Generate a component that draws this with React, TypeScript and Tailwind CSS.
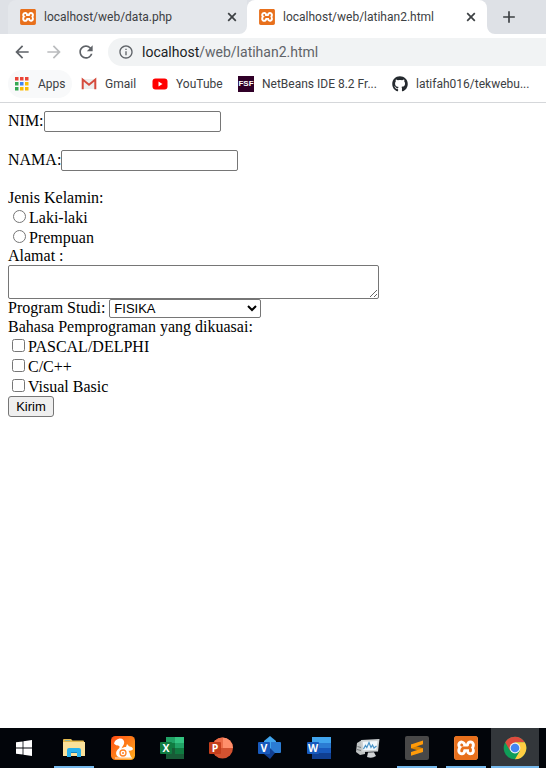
import type { ReactNode } from "react";
import { MdAdd, MdArrowBack, MdArrowForward, MdInfoOutline, MdRefresh } from "react-icons/md";
import { FaGithub } from "react-icons/fa";
import { SiXampp } from "react-icons/si";

function XamppIcon({ large = false }: { large?: boolean }) {
  return (
    <span className={large ? "flex size-6 shrink-0 rounded-sm bg-white" : "flex size-4 shrink-0 rounded-sm bg-white"}>
      <SiXampp className="size-full text-[#e8701c]" />
    </span>
  );
}

function CloseIcon() {
  return (
    <svg className="size-[14px]" viewBox="0 0 14 14">
      <path d="m3.200 3.200 7.600 7.600m0-7.600-7.600 7.600" stroke="currentColor" strokeWidth="1.700" />
    </svg>
  );
}

function TabStrip() {
  return (
    <header className="flex h-[34px] bg-[#dee1e6] pl-2 text-xs text-[#3c4043]">
      <div className="flex w-[231px] items-center rounded-tl-lg bg-[#e4e7eb] pl-3">
        <XamppIcon />
        <span className="flex-1 pl-2">localhost/web/data.php</span>
        <button aria-label="Close tab data.php"><CloseIcon /></button>
      </div>
      <svg className="h-full w-2 bg-[#e4e7eb]" viewBox="0 0 8 34">
        <path d="M8 0v34H0a8 8 0 0 0 8-8z" fill="#fff" />
      </svg>
      <div className="flex w-60 items-center rounded-t-lg bg-white px-3 pr-[9px]">
        <XamppIcon />
        <span className="flex-1 pl-2">localhost/web/latihan2.html</span>
        <button aria-label="Close tab latihan2.html"><CloseIcon /></button>
      </div>
      <svg className="h-full w-2" viewBox="0 0 8 34">
        <path d="M0 26v8h8a8 8 0 0 1-8-8z" fill="#fff" />
      </svg>
      <button aria-label="New tab" className="pl-1"><MdAdd className="size-5" /></button>
    </header>
  );
}

function Toolbar() {
  return (
    <nav className="flex h-9 items-center gap-3 pl-3 text-[#5f6368]">
      <button aria-label="Back"><MdArrowBack className="size-5" /></button>
      <button aria-label="Forward" className="text-[#babcbe]"><MdArrowForward className="size-5" /></button>
      <button aria-label="Reload"><MdRefresh className="size-5" /></button>
      <div className="flex h-7 flex-1 items-center gap-2 rounded-l-full bg-[#f1f3f4] pl-[10px] text-sm">
        <MdInfoOutline className="size-4" />
        <span><span className="text-[#202124]">localhost</span>/web/latihan2.html</span>
      </div>
    </nav>
  );
}

const appColors = ["#ea4335", "#ea4335", "#ea4335", "#34a853", "#4285f4", "#fbbc04", "#34a853", "#fbbc04", "#fbbc04"];

function Bookmark({ icon, children, className }: { icon: ReactNode; children: ReactNode; className: string }) {
  return (
    <a href="#" className={`flex h-7 shrink-0 items-center gap-2 whitespace-nowrap ${className}`}>
      {icon}
      {children}
    </a>
  );
}

function Bookmarks() {
  return (
    <nav className="flex h-[33px] overflow-hidden border-b border-[#d5d7da] pl-2 text-xs text-[#3c4043]">
      <Bookmark
        className="w-[64px] rounded-full bg-[#f8f9fa] pl-[6px]"
        icon={
          <svg className="size-4 shrink-0" viewBox="0 0 16 16">
            {appColors.map((color, i) => (
              <rect key={i} x={1 + (i % 3) * 5} y={1 + Math.floor(i / 3) * 5} width="3.5" height="3.5" fill={color} />
            ))}
          </svg>
        }
      >Apps</Bookmark>
      <Bookmark
        className="w-[72px] pl-[9px]"
        icon={
          <svg className="size-4 shrink-0" viewBox="0 0 16 16">
            <path d="M1 3h14v10H1z" fill="#eee" />
            <path d="M1.7 13.3V3.5L8 8.7l6.3-5.2v9.8" fill="none" stroke="#d54b3d" strokeWidth="2" />
          </svg>
        }
      >Gmail</Bookmark>
      <Bookmark
        className="w-[86px] pl-2"
        icon={
          <svg className="size-4 shrink-0" viewBox="0 0 16 16">
            <rect x=".5" y="2.5" width="15" height="11" rx="3" fill="#f00" />
            <path d="m6.5 5.5 4 2.5-4 2.5z" fill="#fff" />
          </svg>
        }
      >YouTube</Bookmark>
      <Bookmark
        className="w-[154px] pl-2"
        icon={<span className="flex size-4 shrink-0 items-center justify-center bg-[#300028] font-['Liberation_Sans',Arial,sans-serif] text-[8px] font-bold text-white">FSF</span>}
      >NetBeans IDE 8.2 Fr...</Bookmark>
      <Bookmark className="pl-2" icon={<FaGithub className="size-4 text-[#24292e]" />}>latifah016/tekwebu...</Bookmark>
    </nav>
  );
}

const fieldStyle = "rounded-[2px] border border-[#767676] bg-white font-['Liberation_Sans',Arial,sans-serif] text-[13px] text-black";

function TextRow({ id, label }: { id: string; label: string }) {
  return (
    <div className="mb-[18px] flex items-baseline">
      <label htmlFor={id}>{label}:</label>
      <input id={id} type="text" className={`h-[21px] w-[177px] px-[2px] ${fieldStyle}`} />
    </div>
  );
}

function ChoiceRow({ type, name, label }: { type: "radio" | "checkbox"; name: string; label: string }) {
  return (
    <label className={type === "radio" ? "flex h-5 items-end pl-[5px]" : "flex h-5 items-end pl-1"}>
      <input type={type} name={name} className="mt-[3px] mr-[3px] size-[13px] self-start" />
      {label}
    </label>
  );
}

function StudentForm() {
  return (
    <main className="flex-1 p-2 font-['Liberation_Serif','Times_New_Roman',serif] text-base leading-[18px] text-black">
      <form onSubmit={(event) => event.preventDefault()}>
        <TextRow id="nim" label="NIM" />
        <TextRow id="nama" label="NAMA" />
        <fieldset>
          <legend>Jenis Kelamin:</legend>
          <ChoiceRow type="radio" name="kelamin" label="Laki-laki" />
          <ChoiceRow type="radio" name="kelamin" label="Prempuan" />
        </fieldset>
        <label htmlFor="alamat" className="block">Alamat :</label>
        <textarea id="alamat" className={`block h-[34px] w-[371px] resize p-[2px] ${fieldStyle}`} />
        <div className="flex items-start gap-1">
          <label htmlFor="prodi">Program Studi:</label>
          <select id="prodi" className={`h-[19px] w-[152px] ${fieldStyle}`}>
            <option>FISIKA</option>
          </select>
        </div>
        <fieldset>
          <legend>Bahasa Pemprograman yang dikuasai:</legend>
          <ChoiceRow type="checkbox" name="bahasa" label="PASCAL/DELPHI" />
          <ChoiceRow type="checkbox" name="bahasa" label="C/C++" />
          <ChoiceRow type="checkbox" name="bahasa" label="Visual Basic" />
        </fieldset>
        <button className="flex h-[21px] w-[46px] items-center justify-center rounded-[3px] border border-[#767676] bg-[#efefef] font-['Liberation_Sans',Arial,sans-serif] text-[13px]">
          Kirim
        </button>
      </form>
    </main>
  );
}

function Badge({ letter, fill }: { letter: string; fill: string }) {
  return (
    <>
      <rect x="0" y="6" width="12" height="12" rx="1" fill={fill} />
      <text x="6" y="15.7" textAnchor="middle" fontSize="10.5" fontWeight="700" fontFamily="Open Sans, sans-serif" fill="#fff">{letter}</text>
    </>
  );
}

function TaskItem({ label, children, open = false, active = false }: { label: string; children: ReactNode; open?: boolean; active?: boolean }) {
  return (
    <button aria-label={label} className={`flex h-10 w-12 shrink-0 flex-col items-center ${active ? "bg-[#33373b]" : ""}`}>
      <span className="flex flex-1 items-center">{children}</span>
      <span className={`-mt-[2px] h-[2px] ${active ? "w-12" : "w-10"} ${open || active ? "bg-[#76b9ed]" : ""}`} />
    </button>
  );
}

function Taskbar() {
  return (
    <footer className="flex h-10 gap-px overflow-hidden bg-[#02050a]">
      <TaskItem label="Start">
        <svg className="size-4" viewBox="0 0 16 16" fill="#fff">
          <path d="M0 2.3 6.6 1.4V7.6H0zM7.4 1.3 16 0v7.6H7.4zM0 8.4h6.6v6.2L0 13.7zM7.4 8.4H16V16l-8.6-1.3z" />
        </svg>
      </TaskItem>
      <span className="-ml-px w-px" />
      <TaskItem label="File Explorer" open>
        <svg className="size-6" viewBox="0 0 24 24">
          <path d="M1 4q0-1 1-1h7l1.500 1.500H21q1 0 1 1V20H1z" fill="#e3b94f" />
          <path d="M3 4h5v1H3z" fill="#8fb6a0" />
          <path d="M1 6h22v14H1z" fill="#fbe19a" />
          <path d="M5 14q0-2 2-2h10q2 0 2 2v7h-4v-5H9v5H5z" fill="#29b2ee" />
          <path d="M9 16h6v1H9z" fill="#1684bc" />
        </svg>
      </TaskItem>
      <TaskItem label="UC Browser">
        <svg className="size-6" viewBox="0 0 24 24">
          <defs><linearGradient id="uc" x2="1" y2="1"><stop stopColor="#ff4b14" /><stop offset="1" stopColor="#ffb01d" /></linearGradient></defs>
          <rect width="24" height="24" rx="4.500" fill="url(#uc)" />
          <path d="M9 21.500C5.500 20.500 4 17.500 6 14.500c1.200-1.800 3-2.300 2.500-4C8 9 4.500 10 3 7.500 3.500 5 5.500 3 8.500 2.500c3-.3 5 1.700 4.700 4.300-.3 2.500-1.800 3.700-2.700 5.700 1.500-1 2.500-1.500 4.500-1.500l1-3 2 2.200c2.500.3 4 1.500 4 3-1 1.500-2.700 1.300-4.500 1.500 1.700 2.500 1.500 5.300 3 6.800z" fill="#fff" />
          <path d="M4 22h17" stroke="#fff" strokeWidth=".8" />
          <circle cx="12" cy="17" r="3" fill="none" stroke="#ff8426" strokeWidth="1.300" />
          <circle cx="12" cy="17" r="1" fill="#ff8426" />
        </svg>
      </TaskItem>
      <TaskItem label="Excel">
        <svg className="size-6" viewBox="0 0 24 24">
          <path d="M6 1h18v22H6z" fill="#185c37" />
          <path d="M6 1h9v6H6z" fill="#21a366" /><path d="M15 1h9v6h-9z" fill="#33c481" />
          <path d="M6 7h9v5H6z" fill="#107c41" /><path d="M15 7h9v5h-9z" fill="#21a366" />
          <path d="M15 12h9v6h-9z" fill="#107c41" />
          <Badge letter="X" fill="#107c41" />
        </svg>
      </TaskItem>
      <TaskItem label="PowerPoint">
        <svg className="size-6" viewBox="0 0 24 24">
          <circle cx="13.500" cy="12" r="10.500" fill="#d35230" />
          <path d="M13.500 1.500A10.500 10.500 0 0 1 24 12H13.500z" fill="#ff8f6b" />
          <path d="M13.500 1.500V12H3A10.500 10.500 0 0 1 13.500 1.500z" fill="#ed6c47" />
          <Badge letter="P" fill="#c43e1c" />
        </svg>
      </TaskItem>
      <TaskItem label="Visio">
        <svg className="size-6" viewBox="0 0 24 24">
          <path d="m12 0 6 5v8l-6 3-6-5V5z" fill="#41a5ee" />
          <path d="M13 6h9q1 0 1 1v9q0 1-1 1h-9z" fill="#2b7cd3" />
          <path d="m12 12 5 5-5 6-6-5z" fill="#103f91" />
          <Badge letter="V" fill="#185abd" />
        </svg>
      </TaskItem>
      <TaskItem label="Word">
        <svg className="size-6" viewBox="0 0 24 24">
          <path d="M5 1h19v6H5z" fill="#41a5ee" /><path d="M5 7h19v5H5z" fill="#2b7cd3" />
          <path d="M5 12h19v5H5z" fill="#185abd" /><path d="M5 17h19v6H5z" fill="#103f91" />
          <Badge letter="W" fill="#185abd" />
        </svg>
      </TaskItem>
      <TaskItem label="System monitor">
        <svg className="size-6" viewBox="0 0 24 24">
          <path d="m1 7 5-3h3v14l-5 1-4-3z" fill="#bfc3c3" />
          <path d="M1.500 10.500 5 11.500M1 13.500l4 1" stroke="#74797b" />
          <path d="M5 4 23.500 3l-1.500 12.500-16 .500z" fill="#cfd3d4" />
          <path d="m6.800 5.800 14.700-.800-1.200 8.800-12.800.500z" fill="#f2f8fc" />
          <path d="m7.500 13 2-3.500 1.300 2L13 6.500l2 5 1.500-2.500 1.500 3 2.500-2" fill="none" stroke="#4a94c8" strokeWidth="1.200" />
          <path d="m12 16.500 6-.200 2 3.700q-4 3-9 1z" fill="#d0d3d5" />
        </svg>
      </TaskItem>
      <TaskItem label="Sublime Text" open>
        <svg className="size-6" viewBox="0 0 24 24">
          <rect width="24" height="24" rx="2" fill="#484848" />
          <path d="M6 8.500v3.700L18 16v-3.700z" fill="#d98200" />
          <path d="M18 4.500v3.700L6 12.200V8.500zM18 12.300V16L6 19.800V16z" fill="#ff9b0a" />
        </svg>
      </TaskItem>
      <TaskItem label="XAMPP" open><XamppIcon large /></TaskItem>
      <TaskItem label="Chrome" active>
        <svg className="size-6" viewBox="0 0 24 24">
          <circle cx="12" cy="12" r="11.300" fill="#109d58" />
          <path d="M2.200 6.350A11.300 11.300 0 0 1 21.800 6.350H12L7.100 14.830z" fill="#dd4b3e" />
          <path d="M21.800 6.350A11.300 11.300 0 0 1 12 23.300l4.900-8.470L12 6.350z" fill="#ffcd42" />
          <circle cx="12" cy="12" r="5.400" fill="#f1f1f1" />
          <circle cx="12" cy="12" r="4.300" fill="#4285f4" />
        </svg>
      </TaskItem>
    </footer>
  );
}

export default function App() {
  return (
    <div className="flex min-h-screen flex-col overflow-hidden bg-white font-['Roboto','Open_Sans',sans-serif]">
      <TabStrip />
      <Toolbar />
      <Bookmarks />
      <StudentForm />
      <Taskbar />
    </div>
  );
}
